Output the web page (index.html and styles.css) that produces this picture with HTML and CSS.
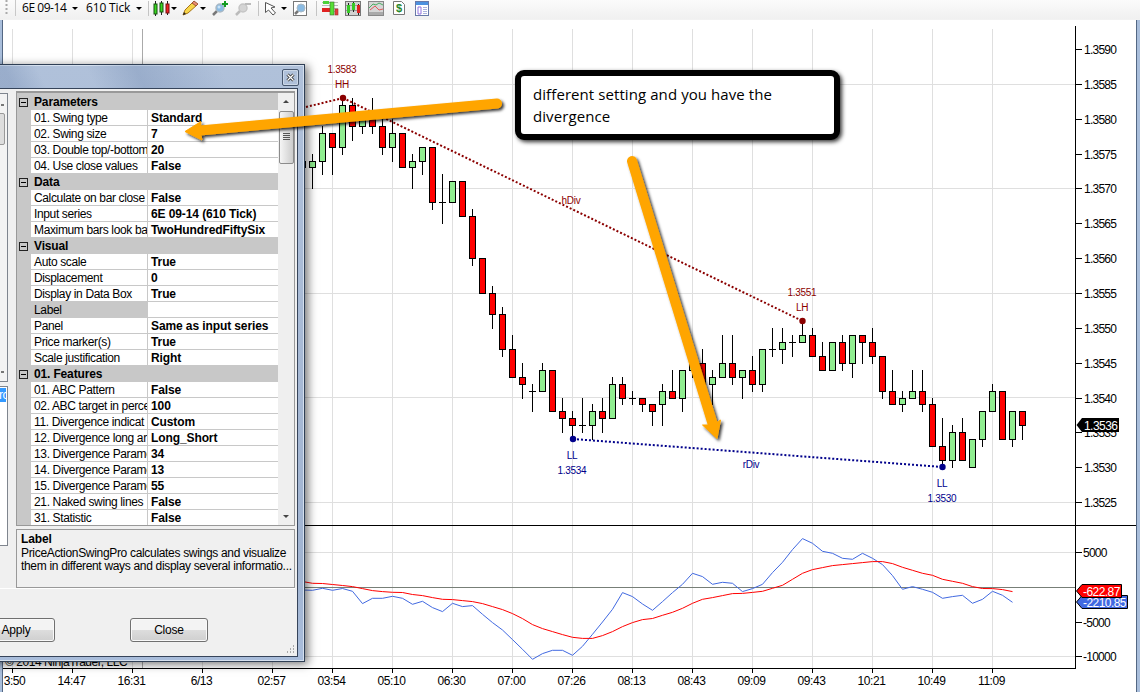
FILE: index.html
```html
<!DOCTYPE html>
<html lang="en">
<head>
<meta charset="utf-8">
<title>6E 09-14 - 610 Tick</title>
<link rel="stylesheet" href="styles.css">
</head>
<body>
<main class="window">
  <header class="toolbar">
    <svg class="grip" width="4" height="16"><path d="M1.5 0V15" stroke="#aaa" stroke-width="2" stroke-dasharray="2 2"/></svg>
    <i class="sep"></i>
    <span class="tool-text instrument">6E 09-14</span><i class="caret"></i>
    <span class="tool-text interval">610 Tick</span><i class="caret"></i>
    <svg class="icons" width="300" height="20" viewBox="144 0 300 20">
      <path d="M148.500 1V16M258.500 1V16M316.500 1V16" stroke="#c4c4c4"/>
      <path d="M155.500 1V16M161.500 1V15M167.500 1V15" stroke="#222"/>
      <rect x="154" y="4" width="3" height="10" fill="#38d820" stroke="#164d10"/>
      <rect x="160" y="3" width="3" height="9" fill="#38d820" stroke="#164d10"/>
      <rect x="166" y="4" width="3" height="9" fill="#f22222" stroke="#721010"/>
      <path d="M171 7h6l-3 3zM200 7h6l-3 3zM281 7h6l-3 3z" fill="#000"/>
      <path d="M183 15l2-5 8-8 4 3-9 8z" fill="#f7d64a" stroke="#a87418"/>
      <path d="M192 3l2-2 4 3-2 2z" fill="#e98b72" stroke="#9b5735"/><path d="M183 15l1-3 2 2z" fill="#222"/>
      <path d="M213 15l4-4" stroke="#777" stroke-width="2.500"/><circle cx="220" cy="8" r="4" fill="#8abbe3" stroke="#a9b8c4" stroke-width="1.500"/><circle cx="219" cy="7" r="1.500" fill="#c9e3f7"/>
      <path d="M225 1v6M222 4h6" stroke="#139b22" stroke-width="2"/>
      <path d="M236 15l4-4" stroke="#bbb" stroke-width="2.500"/><circle cx="243" cy="8" r="4" fill="#d4d4d4" stroke="#c5c5c5" stroke-width="1.500"/><path d="M245 4h6" stroke="#bbb" stroke-width="2"/>
      <path d="M265.500 2.500v10l3-2.500 4.500 5 2.500-2-4.500-5 4-1z" fill="#fff" stroke="#555"/>
      <rect x="293.500" y="1.500" width="13" height="14" fill="#fff" stroke="#777"/><path d="M295 14l4-4" stroke="#777" stroke-width="2.500"/><circle cx="301" cy="8" r="4" fill="#8abbe3" stroke="#a9b8c4"/>
      <path d="M322 2.500h16M322 5.500h16M322 8.500h16M322 11.500h16" stroke="#bbb"/>
      <rect x="323" y="1" width="6" height="3" fill="#4cd23b"/><rect x="322" y="8" width="8" height="4" fill="#e02222"/><rect x="330" y="2" width="4" height="13" fill="#57df36" stroke="#3a7130" stroke-width=".6"/><rect x="335" y="9" width="3" height="6" fill="#e53b3b" stroke="#933" stroke-width=".6"/>
      <rect x="345.500" y="1.500" width="15" height="14" fill="#d2d2d2" stroke="#777"/><path d="M346 5.500h14M346 10.500h14" stroke="#999"/><path d="M348.500 3v12M353.500 2v10M358.500 4v11" stroke="#222"/><path d="M348.500 5v8M353.500 3v7" stroke="#37c927" stroke-width="3"/><path d="M358.500 5v8" stroke="#df2020" stroke-width="3"/>
      <rect x="368.500" y="1.500" width="15" height="14" fill="#d6d6d6" stroke="#888"/><path d="M369 8l4-4 3 1 3-2 4 2" fill="none" stroke="#4bae62"/><path d="M370 10l5-4 4 4 4-1" fill="none" stroke="#e05a5a"/><path d="M369 12h14v3h-14z" fill="#aaa"/>
      <path d="M393.500 1.500h8l3 3v10h-11z" fill="#fff" stroke="#777"/><text class="dollar" x="399" y="12">$</text>
      <rect x="415.500" y="1.500" width="13" height="14" fill="#fff" stroke="#6879a8"/><path d="M416 2h12v3h-12z" fill="#4c91df"/><path d="M418 7h3v7h-3z" fill="#fff" stroke="#9173df"/><path d="M423 7.500h4M423 9.500h4M423 11.500h4M423 13.500h4" stroke="#aab2dd"/>
    </svg>
  </header>
  <svg class="chart" id="chart" width="1140" height="672" viewBox="0 20 1140 672"></svg>
</main>

<section class="dialog">
  <div class="titlebar"><span class="close-box"><svg width="9" height="9" viewBox="0 0 9 9"><path d="M1.500 1.500l6 6M7.500 1.500l-6 6" stroke="#333" stroke-width="3"/><path d="M1.500 1.500l6 6M7.500 1.500l-6 6" stroke="#fff" stroke-width="1.200"/></svg></span></div>
  <div class="client">
    <div class="lists">
      <div class="list-top"><i class="mini-up"></i><i class="mini-thumb"></i><i class="mini-down"></i></div>
      <div class="list-bottom"><span class="picked">rc</span></div>
    </div>
    <div class="properties">
      <div class="grid">
        <div class="rows" id="rows"></div>
        <div class="scroll"><i class="up"></i><span class="thumb"><i></i><i></i><i></i><i></i></span><i class="down"></i></div>
      </div>
      <div class="help"><b>Label</b><p>PriceActionSwingPro calculates swings and visualize</p><p>them in different ways and display several informatio...</p></div>
    </div>
    <div class="actions"><button class="button apply">Apply</button><button class="button close">Close</button></div>
    <svg class="resize" width="9" height="9"><path d="M7 1h1M4 4h1M7 4h1M1 7h1M4 7h1M7 7h1" stroke="#aaa" stroke-width="2"/></svg>
  </div>
</section>

<div class="callout">different setting and you have the divergence</div>
<svg class="arrows" width="1140" height="692">
  <defs><filter id="shade" x="-20%" y="-30%" width="140%" height="160%"><feDropShadow dx="2" dy="2" stdDeviation="1.500" flood-color="#000" flood-opacity=".8"/></filter></defs>
  <g fill="#ffa500" stroke="#ffa500" filter="url(#shade)">
    <path d="M497 103.500L200 130.500M632 161L713 425" stroke-width="10" stroke-linecap="round"/>
    <path d="M185 131.500L201 121.500L200 131L202 140ZM717 438.500L702.500 425L713 425L720.500 420Z" stroke-linejoin="round"/>
  </g>
</svg>
<script src="chart.js"></script>
</body>
</html>
```
FILE: styles.css
```css
* { box-sizing: border-box; }
body { margin: 0; width: 1140px; height: 692px; overflow: hidden; position: relative; background: #fff; font-family: "Liberation Sans", Arial, sans-serif; font-size: 12px; color: #000; }
p { margin: 0; }
.window { display: flex; flex-direction: column; height: 692px; }
.toolbar { height: 20px; display: flex; align-items: flex-start; padding-left: 5px; background: linear-gradient(#fbfbfb, #f0f0f0); border-bottom: 1px solid #f2f2f2; }
.grip { flex: none; }
.sep { width: 1px; height: 16px; margin: 0 6px 0 6px; background: #c8c8c8; }
.tool-text { font: 12px/16px "Open Sans", "Noto Sans", sans-serif; white-space: nowrap; }
.instrument { width: 50px; letter-spacing: -.45px; }
.interval { width: 51px; margin-left: 8px; letter-spacing: -.15px; }
.caret { width: 0; border: 3px solid transparent; border-top-color: #000; border-bottom: 0; margin-top: 7px; flex: none; }
.interval + .caret { margin-left: -1px; }
.icons { flex: none; margin-left: 2px; }
.dollar { font: bold 11px "Liberation Sans", sans-serif; fill: #26862a; text-anchor: middle; }
.chart { display: block; flex: none; }
.axis { font-size: 12px; fill: #000; letter-spacing: -.45px; }
.scale { letter-spacing: -.75px; }
.mark { font-size: 10px; text-anchor: middle; letter-spacing: -.3px; }
.high { fill: #8b0000; }
.low { fill: #00008b; }
.middle { text-anchor: middle; }
.tag { font-size: 12px; fill: #fff; letter-spacing: -.55px; }

.dialog { position: absolute; left: -20px; top: 64px; width: 325px; height: 598px; display: flex; flex-direction: column; padding: 0 6px 4px 0; background: linear-gradient(#b0c1da, #a1b4d1 85%, #a9bddb); border: 1px solid #2f3f55; box-shadow: inset 0 0 0 1px #d5e0ee, 3px 2px 9px rgba(0,0,0,.55); }
.titlebar { height: 23px; flex: none; display: flex; justify-content: flex-end; padding: 4px 0 0; background: linear-gradient(65deg, rgba(65,95,145,.2) 10%, transparent 20%, transparent 35%, rgba(65,95,145,.2) 50%, transparent 76%); }
.close-box { width: 17px; height: 17px; margin-right: -1px; border: 1px solid #47576f; border-radius: 2px; display: grid; place-items: center; box-shadow: inset 0 0 0 1px #cbd7e7; }
.client { position: relative; flex: 1; display: grid; grid-template-columns: 29px 1fr; grid-template-rows: 497px 1fr; column-gap: 6px; background: #f0f0f0; border: 1px solid #36445a; border-left: 0; padding: 2px 2px 0 0; }
.lists { display: flex; flex-direction: column; padding: 2px 2px 42px 0; gap: 4px; }
.list-top { height: 289px; background: #f3f3f3; border: 1px solid #7f858e; display: flex; flex-direction: column; align-items: flex-end; }
.mini-up, .mini-down { width: 3px; height: 2px; background: #777; }
.mini-up { margin-top: 10px; margin-right: 3px; }
.mini-thumb { width: 7px; height: 32px; margin: 7px 2px 0 0; border: 1px solid #999; border-radius: 2px; background: #ddd; }
.mini-down { margin: auto 3px 8px 0; }
.list-bottom { flex: 1; background: #fff; border: 1px solid #7f858e; padding-top: 1px; }
.picked { display: block; height: 14px; line-height: 14px; margin-right: 1px; padding-left: 17px; background: #3399ff; color: #fff; overflow: hidden; letter-spacing: -.6px; }
.properties { display: flex; flex-direction: column; gap: 3px; }
.grid { width: 279px; height: 435px; display: grid; grid-template-columns: 1fr 16px; border: 1px solid #999; border-width: 2px 1px 1px; overflow: hidden; background: #f0f0f0; }
.rows { background: #c8c8c8; height: 432px; padding-top: 1px; overflow: hidden; }
.row { height: 16px; display: grid; grid-template-columns: 116px 1fr; margin-left: 14px; }
.name, .value { height: 15px; line-height: 16px; overflow: hidden; white-space: nowrap; padding-left: 3px; background: #fff; letter-spacing: -.36px; }
.value { margin-left: 1px; font-weight: bold; letter-spacing: -.1px; }
.selected .name { background: #c8c8c8; height: 16px; }
.group { height: 16px; display: flex; align-items: center; font-weight: bold; padding-left: 2px; gap: 6px; letter-spacing: -.15px; }
.box { width: 9px; height: 9px; border: 1px solid #222; display: grid; place-items: center; }
.box::after { content: ""; width: 5px; height: 1px; background: #000; }
.scroll { display: flex; flex-direction: column; align-items: center; background: #efefef; }
.up { border: 3px solid transparent; border-bottom-color: #444; border-top: 0; margin: 7px 0; }
.down { border: 3px solid transparent; border-top-color: #444; border-bottom: 0; margin: auto 0 7px; }
.thumb { width: 15px; height: 53px; margin-top: 1px; border: 1px solid #8c8c8c; border-radius: 2px; background: linear-gradient(90deg,#f5f5f5,#ccc); display: flex; flex-direction: column; align-items: center; gap: 1px; padding-top: 21px; }
.thumb i { width: 7px; height: 1px; background: #555; }
.help { width: 279px; height: 59px; border: 1px solid #999; padding: 2px 4px; white-space: nowrap; line-height: 13px; letter-spacing: -.32px; }
.help b { display: block; height: 15px; line-height: 15px; letter-spacing: -.1px; }
.actions { grid-column: 1 / 3; border-top: 1px solid #fff; display: flex; align-items: flex-start; gap: 75px; padding-top: 29px; }
.button { width: 78px; height: 24px; padding: 0; border: 1px solid #707070; border-radius: 3px; background: linear-gradient(#f3f3f3 0 48%, #ddd 50%, #cfcfcf); box-shadow: inset 0 0 0 1px #f9f9f9; font: 12px "Liberation Sans", sans-serif; letter-spacing: -.2px; }
.apply { margin-left: -4px; }
.resize { position: absolute; right: 2px; bottom: 2px; }
.callout { position: absolute; left: 515px; top: 70px; width: 325px; height: 70px; border: 6px solid #000; border-radius: 9px; background: #fff; padding: 7px 12px; font: 15px/22px "Open Sans", "Noto Sans", sans-serif; letter-spacing: .08px; box-shadow: 2px 2px 4px rgba(0,0,0,.8); }
.arrows { position: absolute; left: 0; top: 0; pointer-events: none; }
```
FILE: chart.js
```js
const chart = document.getElementById('chart');
const priceY = p => 49.5 + (3590 - p) * 6.97;
const snap = v => Math.round(v - .5) + .5;
const line = (x1, y1, x2, y2, c, extra = '') => `<path d="M${x1} ${y1}L${x2} ${y2}" stroke="${c}" ${extra}/>`;
const text = (x, y, s, c) => `<text x="${x}" y="${y}" class="${c}">${s}</text>`;
let out = '<rect y="20" width="1140" height="672" fill="#fff"/>';

// Time grid and labels
const times = [[12.5, '3:50'], [72.5, '14:47'], [132.5, '16:31'], [202.5, '6/13'], [272.5, '02:57'], [332.5, '03:54'], [392.5, '05:10'], [452.5, '06:30'], [512.5, '07:00'], [572.5, '07:26'], [632.5, '08:13'], [692.5, '08:43'], [752.5, '09:09'], [812.5, '09:43'], [872.5, '10:21'], [932.5, '10:49'], [992.5, '11:09']];
for (const [x, label] of times) {
  out += line(x, 29, x, 668, '#dfdfdf') + line(x, 668, x, 673, '#000') + text(x + (x < 20 ? 2 : -1), 685, label, 'axis middle');
}
out += line(142.5, 29, 142.5, 668, '#aaa');
for (const y of [84.5, 188.5, 293.5, 397.5, 502.5, 552.5, 656.5]) out += line(5, y, 1075, y, '#dfdfdf');
out += line(5, 587.5, 1075, 587.5, '#777f77');

// Candles: high, body top, body bottom, low, direction (g up, r down, d doji)
const candles = `3574 3574 3573 3573 r|3575 3574 3573 3570 g|3579 3578 3574 3572 g|3578 3578 3576 3572 r|3583 3582 3576 3575 g|3583 3582 3579 3577 r|3581 3580 3579 3578 g|3583 3580 3579 3578 r|3580 3579 3576 3575 r|3580 3578 3576 3574 g|3578 3578 3573 3573 r|3575 3574 3573 3570 g|3576 3576 3574 3572 g|3576 3576 3568 3567 r|3572 3568 3568 3565 d|3571 3571 3568 3568 g|3571 3571 3566 3566 r|3567 3566 3560 3559 r|3560 3560 3555 3555 r|3556 3555 3552 3550 r|3553 3552 3547 3546 r|3549 3547 3543 3543 r|3545 3543 3542 3540 r|3542 3541 3541 3538 d|3545 3544 3541 3541 g|3544 3544 3538 3538 r|3540 3538 3537 3535 r|3538 3537 3536 3534 r|3540 3536 3536 3535 d|3539 3538 3536 3534 g|3540 3538 3537 3535 r|3543 3542 3537 3537 g|3543 3542 3540 3539 r|3541 3540 3540 3539 d|3540 3540 3539 3538 r|3539 3539 3538 3536 r|3542 3541 3539 3536 g|3544 3541 3540 3540 r|3544 3544 3540 3538 g|3548 3545 3544 3543 g|3547 3545 3542 3542 r|3544 3543 3542 3539 g|3549 3545 3543 3543 g|3549 3545 3543 3542 r|3544 3544 3543 3540 g|3546 3544 3542 3541 r|3547 3547 3542 3541 g|3550 3547 3547 3546 d|3550 3548 3547 3545 g|3549 3548 3548 3546 d|3551 3549 3548 3548 g|3550 3549 3546 3546 r|3548 3546 3544 3544 r|3548 3548 3544 3544 g|3549 3548 3545 3544 r|3549 3549 3545 3543 g|3549 3549 3548 3545 r|3550 3548 3546 3545 r|3546 3546 3541 3540 r|3544 3541 3539 3539 r|3541 3540 3539 3538 g|3544 3541 3540 3540 g|3544 3541 3539 3538 r|3540 3539 3533 3533 r|3537 3533 3531 3530 r|3536 3535 3531 3530 g|3537 3535 3531 3531 r|3534 3534 3530 3530 g|3538 3538 3534 3533 g|3542 3541 3538 3538 g|3541 3541 3534 3534 r|3538 3538 3534 3533 g|3538 3538 3536 3534 r`.split('|');
candles.forEach((c, i) => {
  const [h, t, b, l, dir] = c.split(' ');
  const x = 302.5 + i * 10;
  const [hy, ty, by, ly] = [h, t, b, l].map(v => snap(priceY(+v)));
  if (hy !== ly) out += line(x, hy - (h === t ? 0 : .5), x, ly + .5, '#000');
  out += dir === 'd' ? line(x - 3.5, ty, x + 3.5, ty, '#000')
    : `<rect x="${x - 3}" y="${ty}" width="6" height="${by - ty}" fill="${dir === 'g' ? '#90ee90' : '#f00'}" stroke="#000"/>`;
});

// Swing and divergence lines
const dots = 'stroke-width="2" stroke-dasharray="2 2"';
out += line(306, 107, 343, 98, '#8b0000', dots) + line(343, 98, 802.5, 321, '#8b0000', dots) + line(573, 439, 942.5, 467, '#00008b', dots);
for (const [x, y, c] of [[343, 98, '#8b0000'], [802.5, 321, '#8b0000'], [573, 439, '#00008b'], [942.5, 467, '#00008b']]) out += `<circle cx="${x}" cy="${y}" r="3.200" fill="${c}"/>`;
out += text(342, 73, '1.3583', 'mark high') + text(342, 88, 'HH', 'mark high') + text(571, 204, 'hDiv', 'mark high') + text(802, 296, '1.3551', 'mark high') + text(802, 311, 'LH', 'mark high');
out += text(572, 459, 'LL', 'mark low') + text(572, 474, '1.3534', 'mark low') + text(751, 468, 'rDiv', 'mark low') + text(942, 487, 'LL', 'mark low') + text(942, 502, '1.3530', 'mark low');

// Indicator panel, one value every 10 px
const fast = [590, 590.3, 588.3, 590.3, 588.5, 591.3, 603.6, 598.3, 598.3, 596.3, 598.3, 604.3, 601.3, 607.6, 611.6, 603.3, 606.6, 605.6, 614.3, 622.6, 630, 639.6, 649.3, 659.3, 653.6, 650.3, 650.3, 655.3, 646.3, 634.3, 622, 609.3, 592.6, 596.6, 604, 610.3, 601.6, 592.6, 584.3, 573.3, 576.6, 584.3, 582.3, 583.3, 591.6, 588.6, 584.3, 572.6, 562.3, 549.6, 538.6, 543.3, 551.3, 553.3, 558.3, 559.3, 553.3, 558.3, 564.6, 575.6, 589.3, 586.6, 589.3, 592.3, 598.3, 596.6, 595.3, 603.3, 599.3, 591.3, 595.3, 602.3];
const slow = [581.5, 583.3, 583.5, 584.5, 585.5, 586.6, 588.6, 590.6, 591.6, 592.3, 592.5, 594.5, 595.6, 597.6, 599.3, 599.6, 600.6, 601.6, 603.6, 606.6, 609.6, 613.6, 618.6, 624.6, 628.6, 631.6, 634.6, 637.3, 638.4, 638.4, 635.6, 631.6, 626.6, 622.6, 619.6, 618.5, 615.3, 612.3, 608.3, 603.3, 599.3, 597.6, 595.6, 593.6, 593.4, 592.4, 591.3, 588.3, 585.3, 579.3, 573.3, 569.6, 567.6, 565.6, 564.6, 563.6, 562.6, 561.6, 561.6, 563.6, 567.3, 570.3, 573.3, 575.3, 579.3, 581.3, 583.3, 586.6, 588.5, 588.6, 589.6, 591.6];
const poly = (a, c) => `<polyline points="${a.map((y, i) => `${302.5 + i * 10},${y}`).join(' ')}" fill="none" stroke="${c}"/>`;
out += poly(fast, '#4169e1') + poly(slow, '#f00');

// Axes
out += line(1075.5, 26, 1075.5, 669, '#000') + line(3, 668.5, 1076, 668.5, '#000') + line(3, 525.5, 1136, 525.5, '#000');
for (let p = 3590; p >= 3525; p -= 5) { const y = snap(priceY(p)); out += line(1076, y, 1082, y, '#000') + text(1084, y + 4.5, '1.' + p, 'axis scale'); }
for (const [y, v] of [[552.5, '5000'], [622, '-5000'], [656.5, '-10000']]) out += line(1076, snap(y), 1082, snap(y), '#000') + text(1083, y + 4.5, v, 'axis scale');
out += '<path d="M1076.500 425L1082 418H1119V432H1082Z" fill="#000"/>' + text(1084, 430, '1.3536', 'tag');
out += '<path d="M1076.500 602L1082 595.500H1127.500V608.500H1082Z" fill="#4169e1" stroke="#000"/>' + text(1083, 606.5, '-2210.85', 'tag');
out += '<path d="M1076.500 591L1082 584.500H1121.500V597.500H1082Z" fill="#f00" stroke="#000"/>' + text(1083, 595.5, '-622.87', 'tag');
out += text(5, 666, '© 2014 NinjaTrader, LLC', 'axis');
out += '<path d="M0 20h2v672h-2zM1137 20h3v672h-3z" fill="#a9bedb"/>' + line(2.5, 20, 2.5, 692, '#536783') + line(1136.5, 20, 1136.5, 692, '#536783');
chart.innerHTML = out;

// Property grid
const props = ['#Parameters', '01. Swing type|Standard', '02. Swing size|7', '03. Double top/-bottom|20', '04. Use close values|False', '#Data', 'Calculate on bar close|False', 'Input series|6E 09-14 (610 Tick)', 'Maximum bars look ba|TwoHundredFiftySix', '#Visual', 'Auto scale|True', 'Displacement|0', 'Display in Data Box|True', 'Label|', 'Panel|Same as input series', 'Price marker(s)|True', 'Scale justification|Right', '#01. Features', '01. ABC Pattern|False', '02. ABC target in perce|100', '11. Divergence indicat|Custom', '12. Divergence long ar|Long_Short', '13. Divergence Parame|34', '14. Divergence Parame|13', '15. Divergence Parame|55', '21. Naked swing lines|False', '31. Statistic|False'];
document.getElementById('rows').innerHTML = props.map(p => {
  if (p[0] === '#') return `<div class="group"><i class="box"></i>${p.slice(1)}</div>`;
  const [n, v] = p.split('|');
  return `<div class="row${n === 'Label' ? ' selected' : ''}"><div class="name">${n}</div><div class="value">${v}</div></div>`;
}).join('');
```
